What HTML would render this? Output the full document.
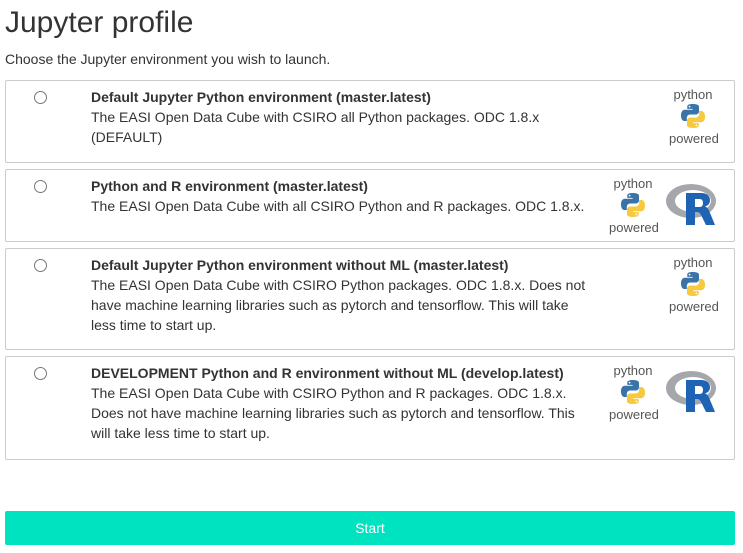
<!DOCTYPE html>
<html><head><meta charset="utf-8"><style>
body{margin:0;width:743px;height:553px;background:#fff;font-family:"Liberation Sans",sans-serif;color:#333;position:relative;overflow:hidden}
h1{position:absolute;left:5px;top:6px;margin:0;font-size:30px;font-weight:normal;color:#333}
.sub{position:absolute;left:5px;top:51px;font-size:14px}
.box{position:absolute;left:5px;width:728px;border:1px solid #ccc;border-radius:2px;background:#fff}
.radio{position:absolute;left:28px;top:10px;width:11px;height:11px;border:1px solid #777;border-radius:50%}
.txt{position:absolute;left:85px;top:6px;font-size:14px;line-height:20px;width:500px}
.py{position:absolute;width:48px;text-align:center;font-size:13px;color:#555;line-height:13px}
.btn{position:absolute;left:5px;top:511px;width:730px;height:34px;background:#00e3c0;color:#fff;font-size:14px;text-align:center;line-height:34px;border-radius:2px}
</style></head><body>
<h1>Jupyter profile</h1>
<div class="sub">Choose the Jupyter environment you wish to launch.</div>

<svg width="0" height="0" style="position:absolute"><defs>
<g id="pyl">
<path d="M11.5 0C6 0 6.3 2.4 6.3 2.4v2.5h5.3v.8H4.2S0 5.2 0 11.2s3.6 5.8 3.6 5.8h2.2v-2.9s-.1-3.6 3.6-3.6h5.2s3.4 0 3.4-3.3V2.8S18.5 0 11.5 0z" fill="#3a73a8"/>
<path d="M12.5 24c5.5 0 5.2-2.4 5.2-2.4v-2.5h-5.3v-.8h7.4S24 18.8 24 12.8s-3.6-5.8-3.6-5.8h-2.2v2.9s.1 3.6-3.6 3.6H9.4s-3.4 0-3.4 3.3v4.4S5.5 24 12.5 24z" fill="#f7c93e"/>
<circle cx="8.6" cy="2.6" r="0.9" fill="#fff"/><circle cx="15.4" cy="21.4" r="0.9" fill="#fff"/>
</g>
<g id="rl">
<ellipse cx="25" cy="18" rx="25" ry="17" fill="#a6a7ab"/>
<ellipse cx="27" cy="18" rx="18" ry="11" fill="#fff"/>
<path d="M20 10h15c6 0 9 3 9 7.3 0 3.4-2 5.4-5 6.2 2 .6 3 2 4 4L49 42h-9l-5-10c-1-2-2-3-4-3h-2v13h-9z M29 16v8h4.5c2.5 0 3.5-1.5 3.5-4s-1-4-3.5-4z" fill="#1e63b4"/>
</g>
</defs></svg>

<div class="box" style="top:80px;height:81px">
<div class="radio"></div>
<div class="txt"><b>Default Jupyter Python environment (master.latest)</b><br>The EASI Open Data Cube with CSIRO all Python packages. ODC 1.8.x<br>(DEFAULT)</div>
<div class="py" style="left:663px;top:7px">python<br><svg width="25" height="25" style="margin:3px 0 1px"><use href="#pyl"/></svg><br>powered</div>
</div>

<div class="box" style="top:169px;height:71px">
<div class="radio"></div>
<div class="txt"><b>Python and R environment (master.latest)</b><br>The EASI Open Data Cube with all CSIRO Python and R packages. ODC 1.8.x.</div>
<div class="py" style="left:603px;top:7px">python<br><svg width="25" height="25" style="margin:3px 0 1px"><use href="#pyl"/></svg><br>powered</div>
<svg style="position:absolute;left:660px;top:13px" width="54" height="44"><use href="#rl"/></svg>
</div>

<div class="box" style="top:248px;height:100px">
<div class="radio"></div>
<div class="txt"><b>Default Jupyter Python environment without ML (master.latest)</b><br>The EASI Open Data Cube with CSIRO Python packages. ODC 1.8.x. Does not have machine learning libraries such as pytorch and tensorflow. This will take less time to start up.</div>
<div class="py" style="left:663px;top:7px">python<br><svg width="25" height="25" style="margin:3px 0 1px"><use href="#pyl"/></svg><br>powered</div>
</div>

<div class="box" style="top:356px;height:102px">
<div class="radio"></div>
<div class="txt"><b>DEVELOPMENT Python and R environment without ML (develop.latest)</b><br>The EASI Open Data Cube with CSIRO Python and R packages. ODC 1.8.x. Does not have machine learning libraries such as pytorch and tensorflow. This will take less time to start up.</div>
<div class="py" style="left:603px;top:7px">python<br><svg width="25" height="25" style="margin:3px 0 1px"><use href="#pyl"/></svg><br>powered</div>
<svg style="position:absolute;left:660px;top:13px" width="54" height="44"><use href="#rl"/></svg>
</div>

<div class="btn">Start</div>
</body></html>
